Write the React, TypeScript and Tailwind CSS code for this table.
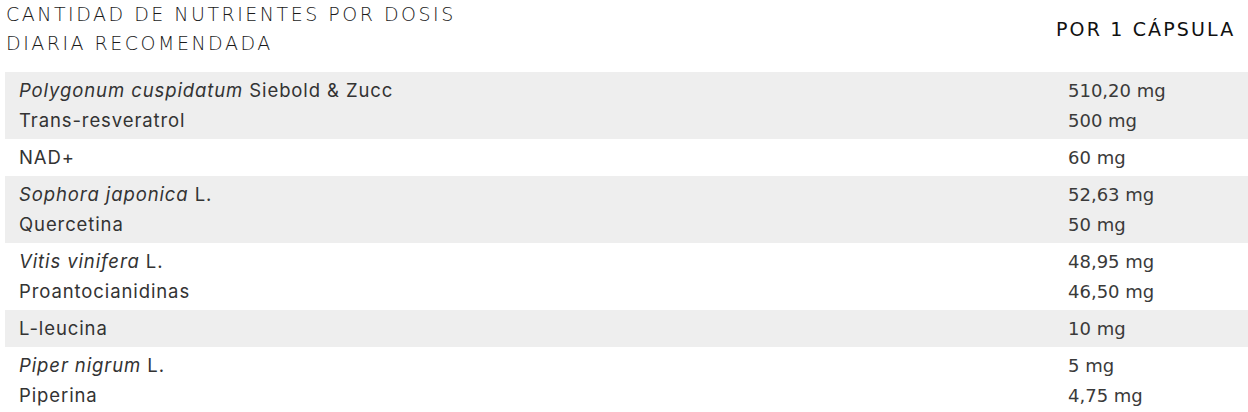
import React from "react";

type Row = { lines: React.ReactNode[]; values: string[]; gray: boolean };

const rows: Row[] = [
  {
    lines: [
      <><i>Polygonum cuspidatum</i> Siebold &amp; Zucc</>,
      <>Trans-resveratrol</>,
    ],
    values: ["510,20 mg", "500 mg"],
    gray: true,
  },
  { lines: [<>NAD+</>], values: ["60 mg"], gray: false },
  {
    lines: [<><i>Sophora japonica</i> L.</>, <>Quercetina</>],
    values: ["52,63 mg", "50 mg"],
    gray: true,
  },
  {
    lines: [<><i>Vitis vinifera</i> L.</>, <>Proantocianidinas</>],
    values: ["48,95 mg", "46,50 mg"],
    gray: false,
  },
  { lines: [<>L-leucina</>], values: ["10 mg"], gray: true },
  {
    lines: [<><i>Piper nigrum</i> L.</>, <>Piperina</>],
    values: ["5 mg", "4,75 mg"],
    gray: false,
  },
];

export default function App() {
  return (
    <div className="w-[1248px] h-[412px] overflow-hidden bg-white pl-[5px] text-[#333333]">
      <div className="grid grid-cols-[1fr_194px] items-start h-[72px]">
        <div className="pl-[1px] font-['DejaVu_Sans',sans-serif] font-light text-[19px] leading-[29px] tracking-[2.5px] text-[#1a1a1a]">
          <div>CANTIDAD DE NUTRIENTES POR DOSIS</div>
          <div>DIARIA RECOMENDADA</div>
        </div>
        <div className="pt-[15px] pl-[2px] font-['DejaVu_Sans',sans-serif] text-[19px] leading-[29px] tracking-[2.15px] text-[#111111]">
          POR 1 CÁPSULA
        </div>
      </div>
      {rows.map((r, i) => (
        <div
          key={i}
          className={`grid grid-cols-[1fr_194px] py-[4px] ${r.gray ? "bg-[#eeeeee]" : "bg-white"}`}
        >
          <div className="pl-[14px] flex flex-col gap-[1px] font-['Inter',sans-serif] text-[18.5px] leading-[29px] tracking-[0.9px] text-[#333333]">
            {r.lines.map((l, j) => (
              <div key={j}>{l}</div>
            ))}
          </div>
          <div className="pl-[14px] flex flex-col gap-[1px] font-['DejaVu_Sans',sans-serif] text-[18px] leading-[29px] text-[#3a3a3a]">
            {r.values.map((v, j) => (
              <div key={j}>{v}</div>
            ))}
          </div>
        </div>
      ))}
    </div>
  );
}
